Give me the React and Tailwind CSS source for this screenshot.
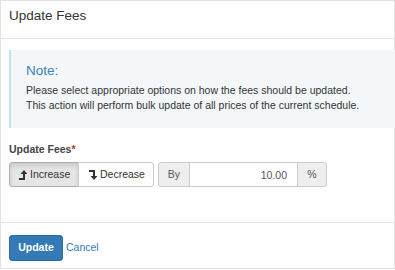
import React, { useState } from "react";

const LevelUp = () => (
  <svg width="8" height="10" viewBox="0 0 8 10" className="shrink-0">
    <polygon points="1.5,4 5,0 8.5,4" fill="#333" />
    <rect x="4" y="3.5" width="2" height="6.5" fill="#333" />
    <rect x="0" y="8" width="6" height="2" fill="#333" />
  </svg>
);

const LevelDown = () => (
  <svg width="8" height="10" viewBox="0 0 8 10" className="shrink-0">
    <rect x="0" y="0" width="6" height="2" fill="#333" />
    <rect x="4" y="0" width="2" height="6.5" fill="#333" />
    <polygon points="1.5,6 8.5,6 5,10" fill="#333" />
  </svg>
);

const App = () => {
  const [mode, setMode] = useState("increase");
  const [amount, setAmount] = useState("10.00");

  return (
    <div className="w-[395px] h-[270px] bg-white font-['Liberation_Sans',Arial,sans-serif] text-[#333]">
      <div className="h-[269px] border border-[#e3e3e3] flex flex-col">
        {/* Header */}
        <div className="h-[38px] border-b border-[#e5e5e5] px-[8px] pt-[7px]">
          <h4 className="text-[13.5px] leading-[16px] text-[#333]">Update Fees</h4>
        </div>

        {/* Body */}
        <div className="px-[8px] pt-[11px] pb-[35px]">
          <div className="relative -mr-[9px] bg-[#f4f7fa] border-l-2 border-[#bde6f0] pl-[15px] pt-[13px] pb-[15px]">
            <div className="text-[13.5px] leading-[16px] text-[#3b84b0]">Note:</div>
            <p className="mt-[4px] text-[10.5px] leading-[15px] text-[#333]">
              Please select appropriate options on how the fees should be updated.
              <br />
              This action will perform bulk update of all prices of the current schedule.
            </p>
          </div>

          <label className="block mt-[14px] mb-[6px] text-[10.5px] leading-[14px] font-bold text-[#444]">
            Update Fees<span className="text-[#c9302c]">*</span>
          </label>

          <div className="flex items-center h-[25px]">
            <div className="flex h-full">
              <button
                type="button"
                onClick={() => setMode("increase")}
                className={
                  mode === "increase"
                    ? "flex items-center gap-[3px] w-[70px] h-full pl-[9px] border border-[#adadad] bg-[#e6e6e6] rounded-l-[3px] shadow-[inset_0_3px_5px_rgba(0,0,0,0.125)] text-[10.5px] text-[#333]"
                    : "flex items-center gap-[3px] w-[70px] h-full pl-[9px] border border-[#ccc] bg-white rounded-l-[3px] text-[10.5px] text-[#333]"
                }
              >
                <LevelUp />
                Increase
              </button>
              <button
                type="button"
                onClick={() => setMode("decrease")}
                className={
                  mode === "decrease"
                    ? "flex items-center gap-[3px] w-[76px] -ml-px h-full pl-[10px] border border-[#adadad] bg-[#e6e6e6] rounded-r-[3px] shadow-[inset_0_3px_5px_rgba(0,0,0,0.125)] text-[10.5px] text-[#333]"
                    : "flex items-center gap-[3px] w-[76px] -ml-px h-full pl-[10px] border border-[#ccc] bg-white rounded-r-[3px] text-[10.5px] text-[#333]"
                }
              >
                <LevelDown />
                Decrease
              </button>
            </div>

            <div className="flex h-full ml-[4px]">
              <span className="flex items-center justify-center w-[32px] h-full border border-[#ccc] bg-[#eee] rounded-l-[3px] text-[10.5px] text-[#555]">
                By
              </span>
              <input
                type="text"
                value={amount}
                onChange={(e) => setAmount(e.target.value)}
                className="w-[109px] h-full -ml-px border border-[#ccc] bg-white text-right pr-[10px] text-[10.5px] text-[#555] outline-none"
              />
              <span className="flex items-center justify-center w-[30px] h-full -ml-px border border-[#ccc] bg-[#eee] rounded-r-[3px] text-[10.5px] text-[#555]">
                %
              </span>
            </div>
          </div>
        </div>

        {/* Footer */}
        <div className="border-t border-[#e5e5e5] px-[8px] pt-[12px] flex items-center gap-[3px]">
          <button
            type="button"
            className="w-[54px] h-[26px] bg-[#337ab7] border border-[#2e6da4] rounded-[3px] text-white text-[10.5px] font-bold"
          >
            Update
          </button>
          <a href="#" className="text-[10.5px] text-[#337ab7]">
            Cancel
          </a>
        </div>
      </div>
    </div>
  );
};

export default App;
